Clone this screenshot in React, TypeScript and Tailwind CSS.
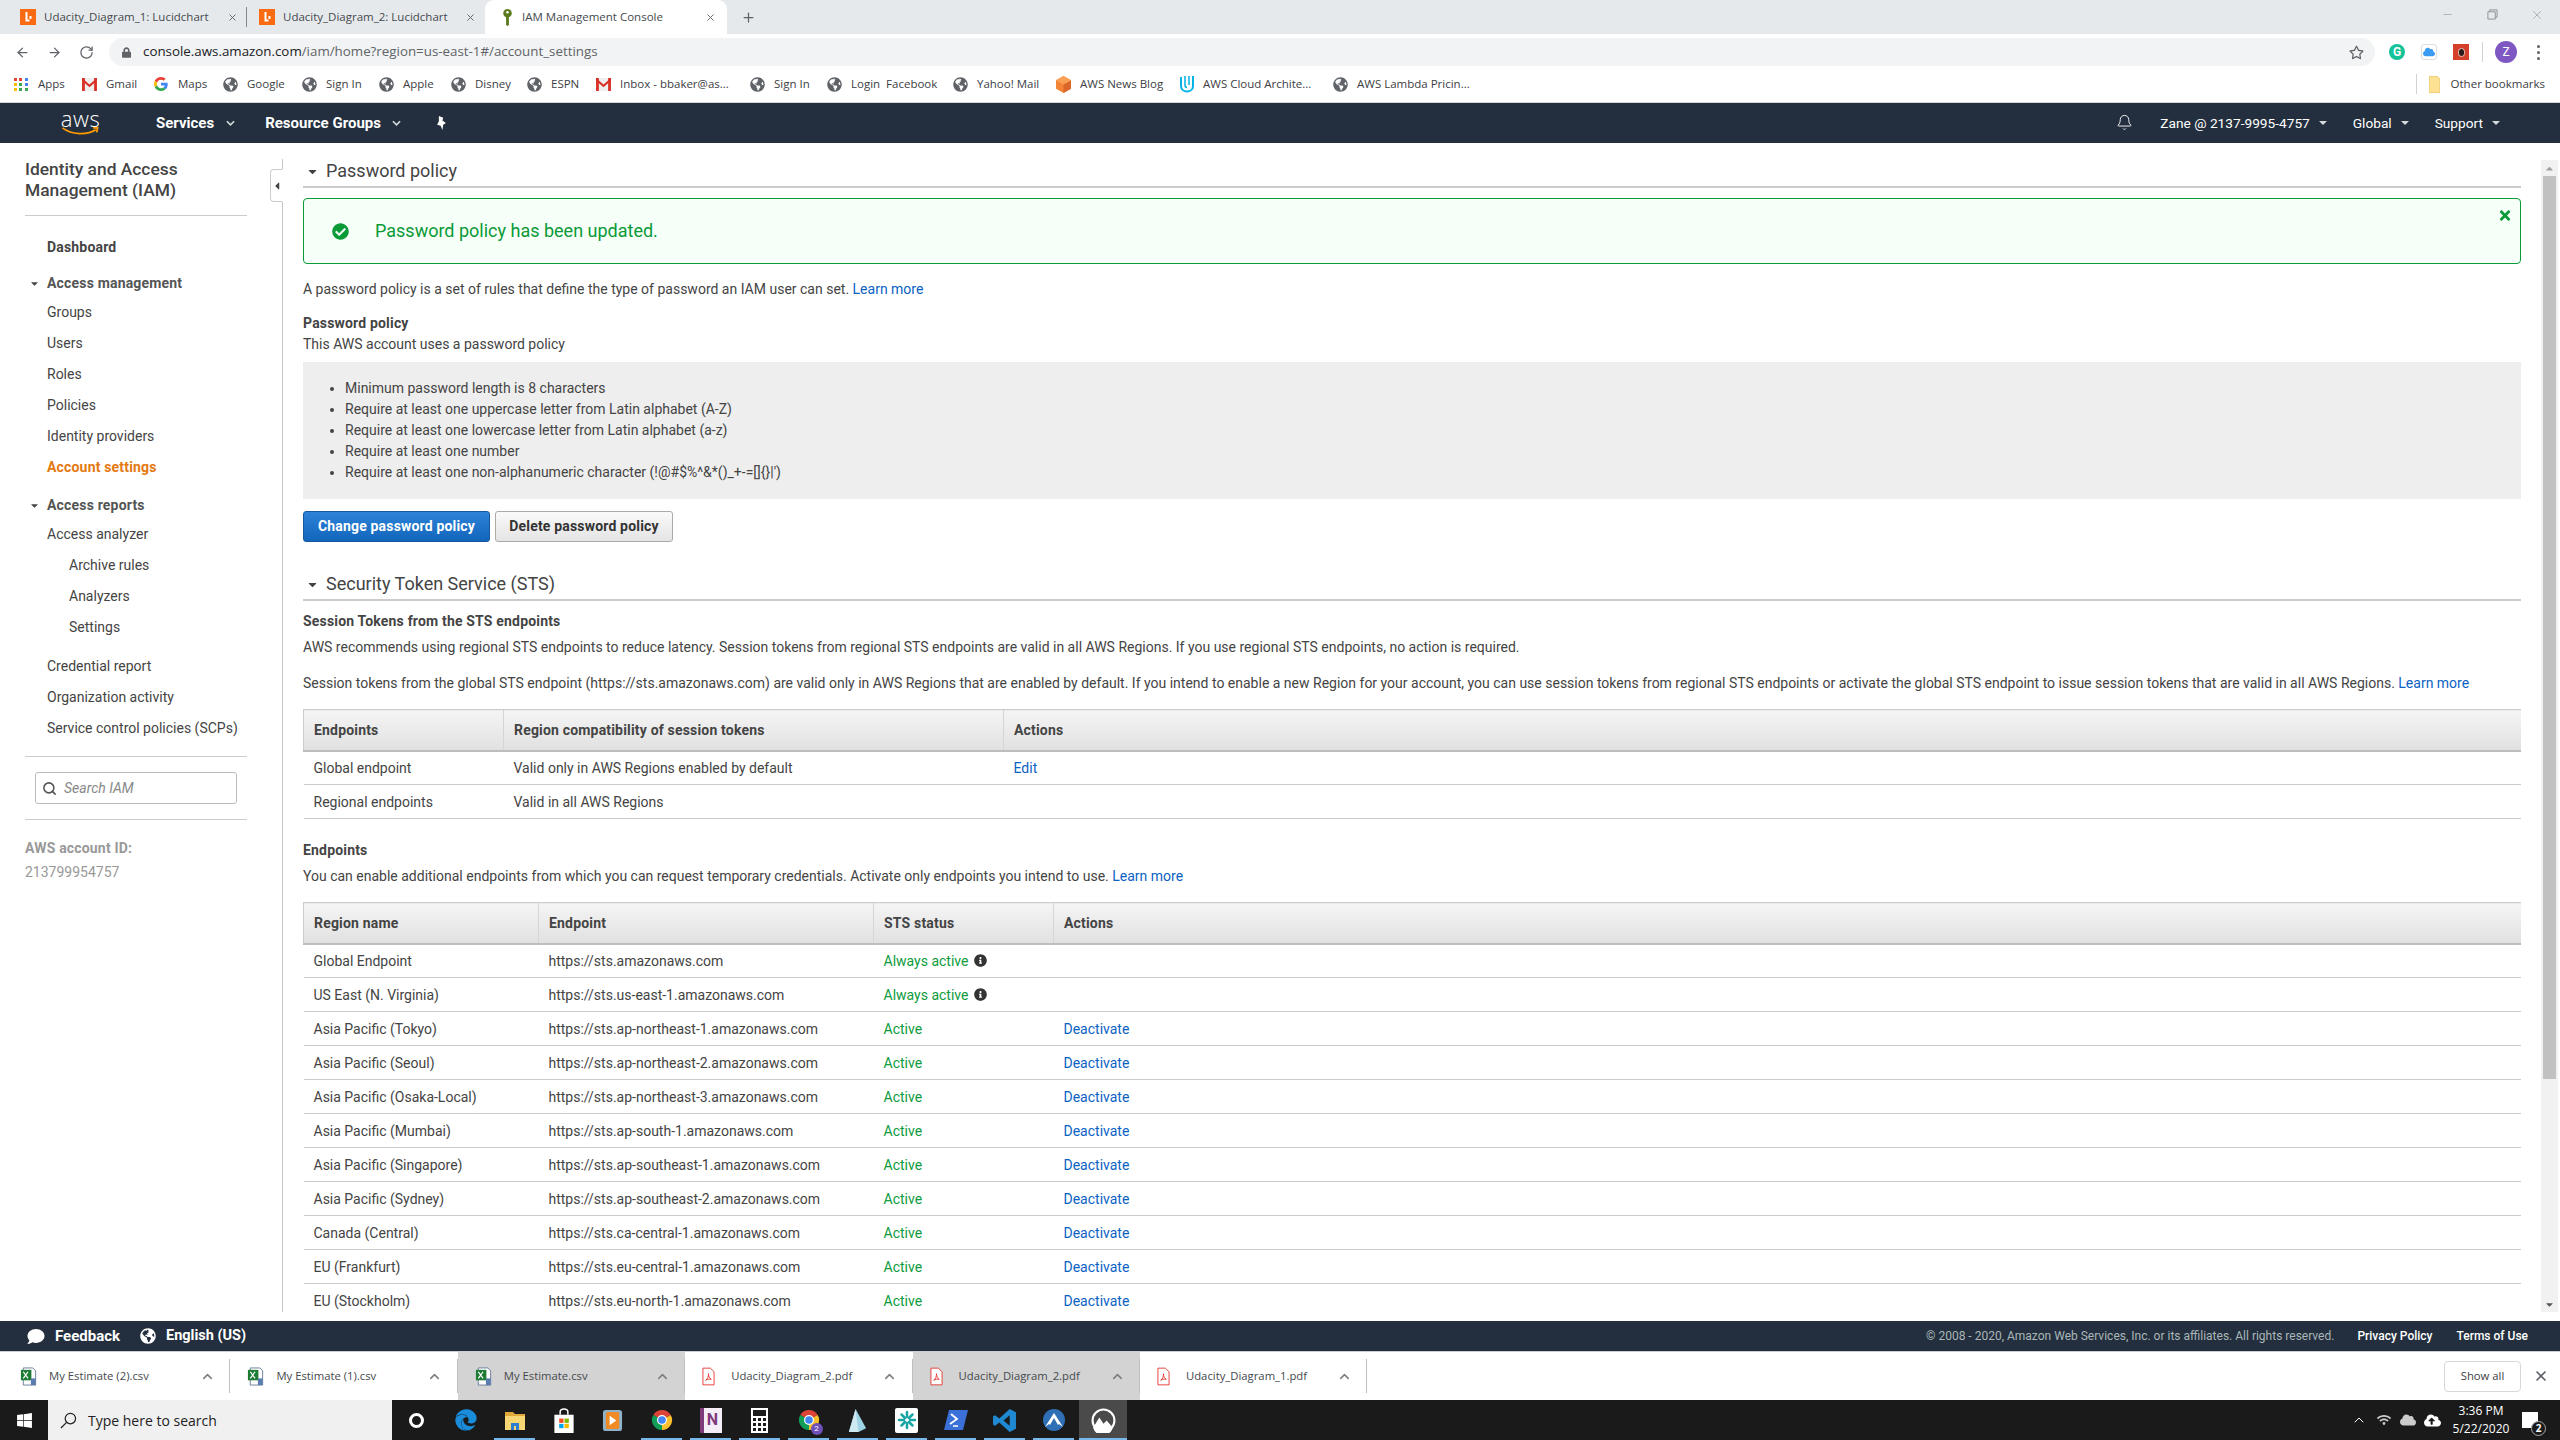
import React from "react";
import { FaGlobeAmericas, FaCheckCircle, FaTimes, FaInfoCircle, FaWindows, FaEdge, FaComment, FaRegStar, FaCaretDown, FaCaretLeft, FaCaretUp, FaLock, FaCloud, FaCloudUploadAlt, FaWifi } from "react-icons/fa";
import { ArrowLeft, ArrowRight, RotateCw, Plus, X, Bell, ChevronUp, Search, Minus } from "lucide-react";

const Globe = () => <FaGlobeAmericas className="w-[15px] h-[15px] text-[#5f6368] shrink-0" />;

const GmailIcon = () => (
  <svg viewBox="0 0 16 14" className="w-[15px] h-[13px] shrink-0">
    <rect x="0" y="0" width="16" height="14" fill="#eee" />
    <path d="M0 0h3v14H0zM13 0h3v14h-3z" fill="#d93025" />
    <path d="M0 0l8 7 8-7v3L8 10 0 3z" fill="#d93025" />
  </svg>
);
const GoogleG = () => (
  <svg viewBox="0 0 48 48" className="w-[14px] h-[14px] shrink-0">
    <path fill="#EA4335" d="M24 9.5c3.5 0 6.6 1.2 9.1 3.6l6.8-6.8C35.8 2.4 30.3 0 24 0 14.6 0 6.5 5.4 2.6 13.2l7.9 6.2C12.4 13.6 17.7 9.5 24 9.5z" />
    <path fill="#4285F4" d="M46.9 24.5c0-1.6-.1-3.1-.4-4.5H24v9h12.9c-.6 3-2.2 5.5-4.8 7.200l7.700 6c4.500-4.200 7.100-10.300 7.100-17.700z" />
    <path fill="#FBBC05" d="M10.500 28.600c-.5-1.500-.8-3-.8-4.600s.3-3.100.8-4.600l-7.900-6.200C.9 16.500 0 20.100 0 24s.9 7.500 2.600 10.800l7.900-6.200z" />
    <path fill="#34A853" d="M24 48c6.500 0 11.900-2.100 15.900-5.800l-7.700-6c-2.200 1.400-4.900 2.300-8.200 2.300-6.300 0-11.600-4.200-13.500-9.900l-7.900 6.200C6.500 42.600 14.600 48 24 48z" />
  </svg>
);
const AppsIcon = () => (
  <div className="grid grid-cols-3 gap-[2px] w-[14px] shrink-0">
    {["bg-[#ea4335]", "bg-[#ea4335]", "bg-[#4285f4]", "bg-[#fbbc05]", "bg-[#34a853]", "bg-[#4285f4]", "bg-[#fbbc05]", "bg-[#34a853]", "bg-[#34a853]"].map((c, i) => (
      <div key={i} className={`w-[3px] h-[3px] ${c}`} />
    ))}
  </div>
);
const Cube = () => (
  <svg viewBox="0 0 16 18" className="w-[15px] h-[17px] shrink-0">
    <path d="M8 0l8 4.500v9L8 18 0 13.500v-9z" fill="#f58536" />
    <path d="M8 9l8-4.500v9L8 18z" fill="#d9672a" />
    <path d="M8 0l8 4.500L8 9 0 4.500z" fill="#f9a053" />
  </svg>
);
const UIcon = () => (
  <svg viewBox="0 0 16 18" className="w-[16px] h-[18px] shrink-0" fill="none" stroke="#02b3e4" strokeWidth="2">
    <path d="M2 2v9c0 3.500 3 5.500 6 5.500s6-2 6-5.500V1" />
    <path d="M6 1v9c0 1.500 1 2.500 2 2.500M10 1v9" strokeWidth="1.500" />
  </svg>
);

const bookmarks: { w: string; icon: React.ReactNode; label: string }[] = [
  { w: "w-[68px]", icon: <AppsIcon />, label: "Apps" },
  { w: "w-[72px]", icon: <GmailIcon />, label: "Gmail" },
  { w: "w-[69px]", icon: <GoogleG />, label: "Maps" },
  { w: "w-[79px]", icon: <Globe />, label: "Google" },
  { w: "w-[77px]", icon: <Globe />, label: "Sign In" },
  { w: "w-[72px]", icon: <Globe />, label: "Apple" },
  { w: "w-[76px]", icon: <Globe />, label: "Disney" },
  { w: "w-[69px]", icon: <Globe />, label: "ESPN" },
  { w: "w-[154px]", icon: <GmailIcon />, label: "Inbox - bbaker@as..." },
  { w: "w-[77px]", icon: <Globe />, label: "Sign In" },
  { w: "w-[126px]", icon: <Globe />, label: "Login  Facebook" },
  { w: "w-[103px]", icon: <Globe />, label: "Yahoo! Mail" },
  { w: "w-[123px]", icon: <Cube />, label: "AWS News Blog" },
  { w: "w-[154px]", icon: <UIcon />, label: "AWS Cloud Archite..." },
  { w: "w-[140px]", icon: <Globe />, label: "AWS Lambda Pricin..." },
];

const Lucid = () => (
  <div className="w-[16px] h-[16px] bg-[#f96b13] flex items-center justify-center shrink-0">
    <svg viewBox="0 0 16 16" className="w-[16px] h-[16px]" fill="none" stroke="#fff" strokeWidth="2">
      <path d="M6.500 3v8.500h3M10.500 7v3" />
    </svg>
  </div>
);
const KeyIcon = () => (
  <svg viewBox="0 0 11 18" className="w-[11px] h-[17px] shrink-0">
    <circle cx="5.500" cy="4.500" r="4.500" fill="#5b7a1f" />
    <circle cx="5.500" cy="3.500" r="1.300" fill="#fff" />
    <path d="M4 8h3v9l-1.500 1L4 17z" fill="#5b7a1f" />
  </svg>
);

const Chevron = () => (
  <svg viewBox="0 0 10 6" className="w-[9px] h-[6px]" fill="none" stroke="#d5dbdb" strokeWidth="1.800">
    <path d="M1 1l4 4 4-4" />
  </svg>
);
const SmallCaret = () => <div className="w-0 h-0 border-x-[4px] border-x-transparent border-t-[4px] border-t-[#d5dbdb]" />;

const Pin = () => (
  <svg viewBox="0 0 12 16" className="w-[11px] h-[14px]" fill="#fff">
    <path d="M3 0l5 2-1 3 4 3-3 2-1 6-2-5-4-1 2-4z" />
  </svg>
);

const SideItem = ({ children, cls }: { children: React.ReactNode; cls: string }) => <div className={`flex items-center ${cls}`}>{children}</div>;

const SideHead = ({ label }: { label: string }) => (
  <div className="flex items-center h-[28px] pl-[4px] font-bold tracking-[0.18px] text-[#555] text-[14px]">
    <FaCaretDown className="w-[11px] h-[11px] text-[#444]" />
    <span className="ml-[7px]">{label}</span>
  </div>
);

const rows = [
  ["Global Endpoint", "https://sts.amazonaws.com", "always"],
  ["US East (N. Virginia)", "https://sts.us-east-1.amazonaws.com", "always"],
  ["Asia Pacific (Tokyo)", "https://sts.ap-northeast-1.amazonaws.com", "active"],
  ["Asia Pacific (Seoul)", "https://sts.ap-northeast-2.amazonaws.com", "active"],
  ["Asia Pacific (Osaka-Local)", "https://sts.ap-northeast-3.amazonaws.com", "active"],
  ["Asia Pacific (Mumbai)", "https://sts.ap-south-1.amazonaws.com", "active"],
  ["Asia Pacific (Singapore)", "https://sts.ap-southeast-1.amazonaws.com", "active"],
  ["Asia Pacific (Sydney)", "https://sts.ap-southeast-2.amazonaws.com", "active"],
  ["Canada (Central)", "https://sts.ca-central-1.amazonaws.com", "active"],
  ["EU (Frankfurt)", "https://sts.eu-central-1.amazonaws.com", "active"],
  ["EU (Stockholm)", "https://sts.eu-north-1.amazonaws.com", "active"],
];

const Th = ({ children, w }: { children?: React.ReactNode; w?: string }) => (
  <th className={`h-[41px] text-left font-bold tracking-[0.18px] text-[#444] text-[14px] pl-[10px] border-l border-l-[#d5d5d5] first:border-l-[#ccc] border-t border-t-[#ccc] border-b-2 border-b-[#bdbdbd] bg-gradient-to-b from-[#f5f5f5] to-[#e1e1e1] ${w ?? ""}`}>{children}</th>
);
const Td = ({ children }: { children?: React.ReactNode }) => <td className="h-[34px] pl-[10px] border-b border-b-[#ccc] text-[#444] text-[14px]">{children}</td>;

const Section = ({ title }: { title: string }) => (
  <div className="flex items-center h-[29px] pb-[3px] border-b-2 border-b-[#ccc] pl-[3px]">
    <FaCaretDown className="w-[13px] h-[13px] text-[#444]" />
    <span className="ml-[7px] text-[18px] text-[#444]">{title}</span>
  </div>
);

const Excel = () => (
  <svg viewBox="0 0 18 20" className="w-[18px] h-[19px]">
    <path d="M3 1h10l3 3v15H3z" fill="#fff" stroke="#6a7f9c" />
    <rect x="0.500" y="3" width="11" height="11" fill="#1e7b34" />
    <path d="M3 5l5 7M8 5l-5 7" stroke="#fff" strokeWidth="1.300" />
    <rect x="11" y="12" width="5" height="7" fill="#5a7db0" />
  </svg>
);
const Pdf = () => (
  <svg viewBox="0 0 14 20" className="w-[13px] h-[19px]" fill="none" stroke="#e53935">
    <path d="M1 1h8l4 4v14H1z" fill="#fff" />
    <path d="M4 14c2-1 3-4 3-7 0 3 1 5 3 6-2-.5-4 0-6 1z" strokeWidth="1" />
  </svg>
);

const downloads = [
  { name: "My Estimate (2).csv", icon: <Excel />, on: false },
  { name: "My Estimate (1).csv", icon: <Excel />, on: false },
  { name: "My Estimate.csv", icon: <Excel />, on: true },
  { name: "Udacity_Diagram_2.pdf", icon: <Pdf />, on: false },
  { name: "Udacity_Diagram_2.pdf", icon: <Pdf />, on: true },
  { name: "Udacity_Diagram_1.pdf", icon: <Pdf />, on: false },
];

const ChromeIcon = () => (
  <svg viewBox="0 0 24 24" className="w-[24px] h-[24px]">
    <path d="M12 12L3.300 7A10 10 0 0 1 20.700 7z" fill="#db4437" />
    <path d="M12 12l8.700-5A10 10 0 0 1 12 22z" fill="#fbc02d" />
    <path d="M12 12v10A10 10 0 0 1 3.300 7z" fill="#0f9d58" />
    <circle cx="12" cy="12" r="5" fill="#fff" />
    <circle cx="12" cy="12" r="3.800" fill="#4285f4" />
  </svg>
);

const Tile = ({ children, on }: { children?: React.ReactNode; on?: boolean }) => (
  <div className="w-[49px] h-[40px] flex items-center justify-center relative shrink-0">
    {children}
    {on && <div className="absolute bottom-0 left-[4px] right-[4px] h-[2px] bg-[#76b9ed]" />}
  </div>
);

export default function App() {
  return (
    <div className="w-[2560px] h-[1440px] overflow-hidden flex flex-col bg-white [font-family:'Roboto',sans-serif]">
      {/* Tab strip */}
      <div className="h-[34px] bg-[#e6e9ec] flex items-stretch shrink-0 [font-family:'Open_Sans',sans-serif] text-[11.5px] text-[#45494d]">
        <div className="w-[247px] flex items-center pl-[20px] pr-[9px] relative">
          <Lucid />
          <span className="ml-[8px] flex-1 whitespace-nowrap">Udacity_Diagram_1: Lucidchart</span>
          <X className="w-[11px] h-[11px] text-[#5f6368]" strokeWidth={2} />
          <div className="absolute right-0 top-[7px] bottom-[7px] w-px bg-[#85898c]" />
        </div>
        <div className="w-[238px] flex items-center pl-[12px] pr-[9px]">
          <Lucid />
          <span className="ml-[8px] flex-1 whitespace-nowrap">Udacity_Diagram_2: Lucidchart</span>
          <X className="w-[11px] h-[11px] text-[#5f6368]" strokeWidth={2} />
        </div>
        <div className="w-[242px] bg-white rounded-t-[9px] flex items-center pl-[17px] pr-[11px]">
          <KeyIcon />
          <span className="ml-[9px] flex-1 whitespace-nowrap">IAM Management Console</span>
          <X className="w-[11px] h-[11px] text-[#5f6368]" strokeWidth={2} />
        </div>
        <div className="flex items-center ml-[14px]">
          <Plus className="w-[15px] h-[15px] text-[#5f6368]" strokeWidth={2} />
        </div>
        <div className="ml-auto flex items-center pb-[5px] text-[#8a8d90]">
          <Minus className="w-[13px] h-[13px]" strokeWidth={1} />
          <svg viewBox="0 0 12 12" className="w-[11px] h-[11px] ml-[33px]" fill="none" stroke="currentColor"><path d="M3 3V1h8v8H9M1 3h8v8H1z" /></svg>
          <X className="w-[14px] h-[14px] ml-[32px] mr-[16px]" strokeWidth={1} />
        </div>
      </div>
      {/* Toolbar */}
      <div className="h-[32px] flex items-center shrink-0 pt-[4px]">
        <div className="w-[109px] flex items-center pl-[15px] text-[#5f6368]">
          <ArrowLeft className="w-[15px] h-[15px]" strokeWidth={2} />
          <ArrowRight className="w-[15px] h-[15px] ml-[17px]" strokeWidth={2} />
          <RotateCw className="w-[15px] h-[15px] ml-[17px]" strokeWidth={2} />
        </div>
        <div className="w-[2266px] h-[28px] rounded-full bg-[#f1f3f4] flex items-center pl-[13px] pr-[11px]">
          <FaLock className="w-[9px] h-[11px] text-[#5f6368]" />
          <span className="ml-[12px] text-[13.33px] [font-family:'Open_Sans',sans-serif] text-[#5f6368]">
            <span className="text-[#202124]">console.aws.amazon.com</span>/iam/home?region=us-east-1#/account_settings
          </span>
          <FaRegStar className="w-[15px] h-[15px] ml-auto text-[#5f6368]" />
        </div>
        <div className="flex items-center ml-[14px]">
          <div className="w-[16px] h-[16px] rounded-full bg-[#15c39a] text-white flex items-center justify-center text-[12px] font-bold">G</div>
          <div className="w-[16px] h-[16px] rounded-[3px] border border-[#ddd] ml-[16px] flex items-center justify-center"><FaCloud className="w-[12px] h-[12px] text-[#3b9bf0]" /></div>
          <div className="w-[16px] h-[16px] bg-[#d5402c] ml-[16px] flex items-center justify-center"><div className="w-[7px] h-[9px] rounded-full bg-[#2a1b1b] border border-[#f5c4bb]" /></div>
          <div className="w-px h-[20px] bg-[#d0d2d4] ml-[13px]" />
          <div className="w-[22px] h-[22px] rounded-full bg-[#7e57c2] text-white text-[12px] flex items-center justify-center ml-[12px]">Z</div>
          <div className="flex flex-col gap-[3px] ml-[20px]">
            <div className="w-[3px] h-[3px] rounded-full bg-[#5f6368]" />
            <div className="w-[3px] h-[3px] rounded-full bg-[#5f6368]" />
            <div className="w-[3px] h-[3px] rounded-full bg-[#5f6368]" />
          </div>
        </div>
      </div>
      {/* Bookmarks */}
      <div className="h-[37px] border-b border-b-[#d4d6d8] flex items-center pl-[14px] shrink-0 [font-family:'Open_Sans',sans-serif] text-[11.5px] text-[#3c4043]">
        {bookmarks.map((b, i) => (
          <div key={i} className={`flex items-center ${b.w} shrink-0`}>
            <div className="w-[24px] flex items-center">{b.icon}</div>
            <span className="whitespace-pre">{b.label}</span>
          </div>
        ))}
        <div className="ml-auto flex items-center pr-[15px]">
          <div className="w-px h-[20px] bg-[#d0d2d4]" />
          <svg viewBox="0 0 12 18" className="w-[11px] h-[17px] ml-[12px]"><path d="M0 0h9l3 3v15H0z" fill="#fde293" stroke="#e9c46a" /></svg>
          <span className="ml-[11px]">Other bookmarks</span>
        </div>
      </div>
      {/* AWS nav */}
      <div className="h-[40px] bg-[#232f3e] flex items-center shrink-0 text-white text-[15px]">
        <div className="ml-[60px] w-[41px] flex flex-col items-center">
          <span className="text-[22px] leading-[17px] font-light [font-family:'Open_Sans',sans-serif] tracking-[0.5px]">aws</span>
          <svg viewBox="0 0 42 10" className="w-[41px] h-[9px]" fill="none" stroke="#f90" strokeWidth="2">
            <path d="M1 1c10 8 28 8 37 2M35 1l5 0-1 5" />
          </svg>
        </div>
        <span className="ml-[55px] font-bold">Services</span>
        <div className="ml-[12px]"><Chevron /></div>
        <span className="ml-[30px] font-bold">Resource Groups</span>
        <div className="ml-[11px]"><Chevron /></div>
        <div className="ml-[35px]"><Pin /></div>
        <div className="ml-auto flex items-center text-[13.7px] pr-[60px]">
          <Bell className="w-[17px] h-[19px]" strokeWidth={1.3} />
          <span className="ml-[27px]">Zane @ 2137-9995-4757</span>
          <div className="ml-[9px]"><SmallCaret /></div>
          <span className="ml-[26px]">Global</span>
          <div className="ml-[9px]"><SmallCaret /></div>
          <span className="ml-[26px]">Support</span>
          <div className="ml-[9px]"><SmallCaret /></div>
        </div>
      </div>
      {/* Body */}
      <div className="h-[1178px] flex shrink-0 overflow-hidden">
        <div className="w-[283px] shrink-0 relative pt-[16px] pb-[9px]">
          <div className="h-full border-r border-r-[#c8c8c8] pl-[25px] pr-[35px] text-[14px] text-[#444]">
            <div className="text-[17.4px] leading-[21px] font-medium text-[#444]">
              Identity and Access
              <br />
              Management (IAM)
            </div>
            <div className="h-px bg-[#ccc] mt-[14px]" />
            <SideItem cls="h-[31px] mt-[16px] pl-[22px] font-bold tracking-[0.18px]">Dashboard</SideItem>
            <div className="mt-[6px]"><SideHead label="Access management" /></div>
            {["Groups", "Users", "Roles", "Policies", "Identity providers"].map((t) => (
              <SideItem key={t} cls="h-[31px] pl-[22px]">{t}</SideItem>
            ))}
            <SideItem cls="h-[31px] pl-[22px] font-bold tracking-[0.18px] text-[#e47911]">Account settings</SideItem>
            <div className="mt-[8px]"><SideHead label="Access reports" /></div>
            <SideItem cls="h-[31px] pl-[22px]">Access analyzer</SideItem>
            {["Archive rules", "Analyzers", "Settings"].map((t) => (
              <SideItem key={t} cls="h-[31px] pl-[44px]">{t}</SideItem>
            ))}
            <div className="mt-[8px]">
              {["Credential report", "Organization activity", "Service control policies (SCPs)"].map((t) => (
                <SideItem key={t} cls="h-[31px] pl-[22px] whitespace-nowrap">{t}</SideItem>
              ))}
            </div>
            <div className="h-px bg-[#ccc] mt-[12px]" />
            <div className="h-[32px] mt-[15px] mx-[10px] border border-[#bbb] rounded-[3px] flex items-center pl-[6px]">
              <Search className="w-[15px] h-[15px] text-[#555]" strokeWidth={2.5} />
              <span className="ml-[7px] italic text-[#888]">Search IAM</span>
            </div>
            <div className="h-px bg-[#ccc] mt-[15px]" />
            <div className="mt-[18px] h-[20px] leading-[20px] font-bold tracking-[0.18px] text-[#999]">AWS account ID:</div>
            <div className="mt-[4px] h-[20px] leading-[20px] text-[#999]">213799954757</div>
          </div>
          <div className="absolute left-[270px] top-[26px] w-[13px] h-[33px] bg-white border border-[#ccc] border-r-white rounded-l-[4px] flex items-center justify-center">
            <FaCaretLeft className="w-[10px] h-[12px] text-[#444]" />
          </div>
        </div>
        {/* Main */}
        <div className="flex-1 pb-[9px] min-w-0">
          <div className="h-full overflow-hidden flex">
            <div className="w-[2218px] ml-[20px] pt-[16px] text-[14px] text-[#444] leading-[20px] shrink-0">
              <Section title="Password policy" />
              <div className="mt-[10px] h-[66px] border border-[#0a9a37] rounded-[4px] bg-[#f6fff8] flex items-center pl-[28px] relative">
                <FaCheckCircle className="w-[17px] h-[17px] text-[#0a9a37]" />
                <span className="ml-[26px] text-[18px] text-[#0a9a37]">Password policy has been updated.</span>
                <FaTimes className="absolute right-[8px] top-[9px] w-[14px] h-[15px] text-[#0a9a37]" />
              </div>
              <div className="mt-[15px]">
                A password policy is a set of rules that define the type of password an IAM user can set. <span className="text-[#0b62c4]">Learn more</span>
              </div>
              <div className="mt-[14px] font-bold tracking-[0.18px] leading-[21px]">Password policy</div>
              <div className="leading-[21px]">This AWS account uses a password policy</div>
              <ul className="mt-[7px] bg-[#eee] py-[16px] pl-[42px] list-disc leading-[21px]">
                <li>Minimum password length is 8 characters</li>
                <li>Require at least one uppercase letter from Latin alphabet (A-Z)</li>
                <li>Require at least one lowercase letter from Latin alphabet (a-z)</li>
                <li>Require at least one number</li>
                <li>Require at least one non-alphanumeric character (!@#$%^&*()_+-=[]{"{}"}|')</li>
              </ul>
              <div className="mt-[12px] flex gap-[5px]">
                <div className="w-[187px] h-[31px] pb-[1px] rounded-[3px] border border-[#15589e] bg-gradient-to-b from-[#2c83d8] to-[#1166bb] text-white font-bold tracking-[0.18px] flex items-center justify-center">Change password policy</div>
                <div className="w-[178px] h-[31px] pb-[1px] rounded-[3px] border border-[#aaa] bg-gradient-to-b from-[#fafafa] to-[#e4e4e4] text-[#333] font-bold tracking-[0.18px] flex items-center justify-center">Delete password policy</div>
              </div>
              <div className="mt-[30px]"><Section title="Security Token Service (STS)" /></div>
              <div className="mt-[10px] font-bold tracking-[0.18px]">Session Tokens from the STS endpoints</div>
              <div className="mt-[6px]">AWS recommends using regional STS endpoints to reduce latency. Session tokens from regional STS endpoints are valid in all AWS Regions. If you use regional STS endpoints, no action is required.</div>
              <div className="mt-[16px] whitespace-nowrap">
                Session tokens from the global STS endpoint (https://sts.amazonaws.com) are valid only in AWS Regions that are enabled by default. If you intend to enable a new Region for your account, you can use session tokens from regional STS endpoints or activate the global STS endpoint to issue session tokens that are valid in all AWS Regions. <span className="text-[#0b62c4]">Learn more</span>
              </div>
              <table className="mt-[16px] w-full table-fixed border-collapse">
                <thead>
                  <tr>
                    <Th w="w-[200px]">Endpoints</Th>
                    <Th w="w-[500px]">Region compatibility of session tokens</Th>
                    <Th>Actions</Th>
                  </tr>
                </thead>
                <tbody>
                  <tr><Td>Global endpoint</Td><Td>Valid only in AWS Regions enabled by default</Td><Td><span className="text-[#0b62c4]">Edit</span></Td></tr>
                  <tr><Td>Regional endpoints</Td><Td>Valid in all AWS Regions</Td><Td /></tr>
                </tbody>
              </table>
              <div className="mt-[21px] font-bold tracking-[0.18px]">Endpoints</div>
              <div className="mt-[6px]">You can enable additional endpoints from which you can request temporary credentials. Activate only endpoints you intend to use. <span className="text-[#0b62c4]">Learn more</span></div>
              <table className="mt-[16px] w-full table-fixed border-collapse">
                <thead>
                  <tr>
                    <Th w="w-[235px]">Region name</Th>
                    <Th w="w-[335px]">Endpoint</Th>
                    <Th w="w-[180px]">STS status</Th>
                    <Th>Actions</Th>
                  </tr>
                </thead>
                <tbody>
                  {rows.map((r) => (
                    <tr key={r[0]}>
                      <Td>{r[0]}</Td>
                      <Td>{r[1]}</Td>
                      <Td>
                        {r[2] === "always" ? (
                          <span className="flex items-center text-[#0d9b3d]">Always active<FaInfoCircle className="ml-[6px] w-[13px] h-[13px] text-[#333]" /></span>
                        ) : (
                          <span className="text-[#0d9b3d]">Active</span>
                        )}
                      </Td>
                      <Td>{r[2] === "active" && <span className="text-[#0b62c4]">Deactivate</span>}</Td>
                    </tr>
                  ))}
                </tbody>
              </table>
            </div>
            <div className="ml-[20px] w-[17px] mt-[17px] bg-[#f1f1f1] flex flex-col items-center shrink-0">
              <div className="h-[16px] flex items-center justify-center"><FaCaretUp className="w-[11px] h-[11px] text-[#a0a0a0]" /></div>
              <div className="w-[13px] h-[903px] bg-[#c1c1c1]" />
              <div className="mt-auto h-[16px] flex items-center justify-center"><FaCaretDown className="w-[11px] h-[11px] text-[#555]" /></div>
            </div>
          </div>
        </div>
      </div>
      {/* Footer */}
      <div className="h-[30px] bg-[#232f3e] flex items-center shrink-0 text-[12px] text-white">
        <FaComment className="ml-[27px] w-[18px] h-[17px]" />
        <span className="ml-[10px] font-bold text-[15px]">Feedback</span>
        <FaGlobeAmericas className="ml-[20px] w-[16px] h-[16px]" />
        <span className="ml-[10px] font-bold text-[14.5px]">English (US)</span>
        <div className="ml-auto flex items-center pr-[32px]">
          <span className="text-[#aab7b8]">© 2008 - 2020, Amazon Web Services, Inc. or its affiliates. All rights reserved.</span>
          <span className="ml-[23px] font-medium">Privacy Policy</span>
          <span className="ml-[24px] font-medium">Terms of Use</span>
        </div>
      </div>
      {/* Downloads */}
      <div className="h-[49px] border-t border-t-[#ccd0d4] flex items-stretch shrink-0 pl-[3px] [font-family:'Open_Sans',sans-serif] text-[11.3px] text-[#45494d]">
        {downloads.map((d, i) => (
          <div key={i} className={`w-[227.4px] shrink-0 flex items-center pl-[17px] relative ${d.on ? "bg-[#d3d3d3]" : ""}`}>
            <div className="w-[29px] flex items-center">{d.icon}</div>
            <span className="whitespace-nowrap">{d.name}</span>
            <ChevronUp className="absolute left-[197px] w-[15px] h-[15px] text-[#7c7f82]" strokeWidth={2.5} />
            <div className="absolute right-0 top-[7px] bottom-[7px] w-px bg-[#bdbfc1]" />
          </div>
        ))}
        <div className="ml-auto flex items-center pr-[11px]">
          <div className="w-[77px] h-[31px] border border-[#d5d7d9] rounded-[4px] flex items-center justify-center text-[#3c4043]">Show all</div>
          <X className="ml-[12px] w-[16px] h-[16px] text-[#5f6368]" strokeWidth={2.5} />
        </div>
      </div>
      {/* Taskbar */}
      <div className="h-[40px] bg-[#1a1a1a] flex items-stretch shrink-0 text-white">
        <div className="w-[48px] flex items-center justify-center"><FaWindows className="w-[17px] h-[17px]" /></div>
        <div className="w-[344px] bg-[#f0f0f0] flex items-center pl-[12px] text-[#222] [font-family:'Open_Sans',sans-serif] text-[14px]">
          <svg viewBox="0 0 18 18" className="w-[17px] h-[17px]" fill="none" stroke="#222" strokeWidth="1.300"><circle cx="11" cy="7" r="5.500" /><path d="M7 11l-6 6" /></svg>
          <span className="ml-[11px]">Type here to search</span>
        </div>
        <Tile><div className="w-[15px] h-[15px] rounded-full border-[3px] border-white" /></Tile>
        <Tile><FaEdge className="w-[22px] h-[22px] text-[#1a8cdc]" /></Tile>
        <Tile on><svg viewBox="0 0 22 22" className="w-[22px] h-[22px]"><path d="M1 3h8l2 2h10v5H1z" fill="#e0a83a" /><path d="M1 7h20v14H1z" fill="#f7d774" /><path d="M7 21v-7h8v7h-3v-4h-2v4z" fill="#2d7dd2" /></svg></Tile>
        <Tile><svg viewBox="0 0 22 26" className="w-[22px] h-[25px]"><path d="M1 7h20v19H1z" fill="#fff" /><path d="M7 7V4c0-4 8-4 8 0v3" fill="none" stroke="#fff" strokeWidth="1.500" /><rect x="6" y="11" width="4.500" height="4.500" fill="#f25022" /><rect x="11.500" y="11" width="4.500" height="4.500" fill="#7fba00" /><rect x="6" y="16.500" width="4.500" height="4.500" fill="#00a4ef" /><rect x="11.500" y="16.500" width="4.500" height="4.500" fill="#ffb900" /></svg></Tile>
        <Tile><svg viewBox="0 0 22 24" className="w-[21px] h-[23px]"><rect x="1" y="1" width="20" height="22" rx="3" fill="#8fb2c9" /><rect x="4" y="3" width="14" height="18" rx="2" fill="#f08a24" /><path d="M8 7l7 5-7 5z" fill="#fff" /></svg></Tile>
        <Tile on><ChromeIcon /></Tile>
        <Tile on><div className="w-[22px] h-[25px] bg-[#f4eef8] border-l-[4px] border-l-[#80397b] flex items-center justify-center text-[#80397b] text-[16px] font-bold leading-none">N</div></Tile>
        <Tile on><div className="w-[17px] h-[25px] bg-white p-[2px]"><div className="h-[6px] bg-[#1a1a1a]" /><div className="grid grid-cols-3 gap-[2px] mt-[2px]">{[0, 1, 2, 3, 4, 5, 6, 7, 8].map((n) => <div key={n} className="h-[3px] bg-[#1a1a1a]" />)}</div></div></Tile>
        <Tile on><div className="relative"><ChromeIcon /><div className="absolute -right-[2px] -bottom-[3px] w-[12px] h-[12px] rounded-full bg-[#6f4fb8] text-white text-[8px] flex items-center justify-center">2</div></div></Tile>
        <Tile on><svg viewBox="0 0 22 26" className="w-[21px] h-[25px]"><path d="M9 1l11 20-8 4H2z" fill="#9ed3e6" /><path d="M9 1L2 25h10z" fill="#cfe9f2" /></svg></Tile>
        <Tile on><div className="w-[23px] h-[25px] bg-white rounded-[2px] flex items-center justify-center"><svg viewBox="0 0 20 20" className="w-[20px] h-[20px]" stroke="#1aa5a5" strokeWidth="2.500" strokeLinecap="round"><path d="M10 2v5M10 13v5M2 10h5M13 10h5M4.500 4.500l3.500 3.500M12 12l3.500 3.500M15.500 4.500L12 8M8 12l-3.500 3.500" /></svg></div></Tile>
        <Tile on><svg viewBox="0 0 24 24" className="w-[24px] h-[24px]"><path d="M5 2h19l-5 20H0z" fill="#3a70d8" /><path d="M7 6l6 5-7 5" fill="none" stroke="#fff" strokeWidth="1.800" /><path d="M9 18h5" stroke="#fff" strokeWidth="1.500" /></svg></Tile>
        <Tile on><svg viewBox="0 0 24 24" className="w-[25px] h-[25px]"><path d="M17 1l6 3v16l-6 3-10-9-4 3-2-1V8l2-1 4 3z" fill="#1f8ad2" /><path d="M17 7l-6 5 6 5z" fill="#1a1a1a" /></svg></Tile>
        <Tile on><svg viewBox="0 0 24 24" className="w-[24px] h-[24px]"><circle cx="12" cy="12" r="11" fill="#2f6fb5" /><path d="M3 19L12 5l9 14-4-3-1 1-4-7-4 7-1-1z" fill="#fff" /></svg></Tile>
        <div className="w-[48px] h-[40px] bg-[#4a4a4a] ml-[1px] relative flex items-center justify-center shrink-0">
          <svg viewBox="0 0 24 24" className="w-[25px] h-[25px]"><circle cx="12" cy="12" r="10.500" fill="none" stroke="#fff" strokeWidth="2" /><path d="M2 19l6-10 4 6 3-3 6 7a10 10 0 0 1-19 0z" fill="#fff" /></svg>
          <div className="absolute bottom-0 inset-x-0 h-[2px] bg-[#76b9ed]" />
        </div>
        <div className="ml-auto flex items-center text-[12px] [font-family:'Open_Sans',sans-serif]">
          <ChevronUp className="w-[16px] h-[16px]" strokeWidth={1.5} />
          <FaWifi className="ml-[10px] w-[14px] h-[14px] text-[#ccc]" />
          <FaCloud className="ml-[9px] w-[16px] h-[14px] text-[#ccc]" />
          <FaCloudUploadAlt className="ml-[8px] w-[17px] h-[15px]" />
          <div className="ml-[10px] w-[60px] flex flex-col items-center leading-[18px]">
            <span>3:36 PM</span>
            <span>5/22/2020</span>
          </div>
          <div className="relative ml-[11px] mr-[22px] w-[16px] h-[16px] bg-white">
            <div className="absolute -right-[8px] -bottom-[8px] w-[15px] h-[15px] rounded-full border border-[#aaa] bg-[#1a1a1a] text-[10px] flex items-center justify-center font-bold">2</div>
          </div>
        </div>
      </div>
    </div>
  );
}
